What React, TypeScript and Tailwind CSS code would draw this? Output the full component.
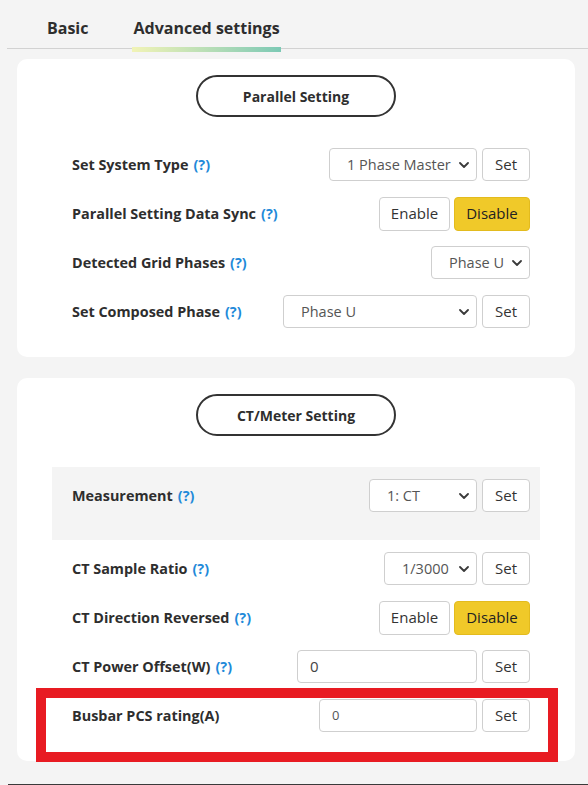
import React from "react";

const Help = () => <span className="ml-[5px] font-bold text-[#1f8ad9]">(?)</span>;

const Label = ({ text, help = true }: { text: string; help?: boolean }) => (
  <div className="text-[14.4px] font-bold leading-5 text-[#2e2e2e]">
    {text}
    {help && <Help />}
  </div>
);

const Chevron = () => (
  <svg width="10" height="6" viewBox="0 0 10 6" className="shrink-0">
    <path d="M1 1 L5 5 L9 1" fill="none" stroke="#3a3a3a" strokeWidth="1.8" strokeLinecap="round" strokeLinejoin="round" />
  </svg>
);

const Select = ({ value, w }: { value: string; w: string }) => (
  <div
    className={`flex h-[33px] ${w} items-center justify-between rounded-[4px] border border-[#cfcfcf] bg-white pl-[17px] pr-[7px] text-[14.5px] text-[#555]`}
  >
    <span>{value}</span>
    <Chevron />
  </div>
);

const SetBtn = () => (
  <div className="flex h-[33px] w-[48px] items-center justify-center rounded-[4px] border border-[#cfcfcf] bg-white text-[15px] text-[#333]">
    Set
  </div>
);

const Toggle = () => (
  <div className="flex gap-[4px]">
    <div className="flex h-[34px] w-[71px] items-center justify-center rounded-[4px] border border-[#cfcfcf] bg-white text-[15px] text-[#333]">
      Enable
    </div>
    <div className="flex h-[34px] w-[76px] items-center justify-center rounded-[4px] border border-[#e3bb1e] bg-[#f0c929] text-[15px] text-[#222]">
      Disable
    </div>
  </div>
);

const Row = ({ children, className = "" }: { children: React.ReactNode; className?: string }) => (
  <div className={`flex h-[49px] items-center justify-between pl-5 pr-[10px] ${className}`}>{children}</div>
);

const Pill = ({ text }: { text: string }) => (
  <div className="mx-auto flex h-[42px] w-[200px] items-center justify-center rounded-full border-2 border-[#333] text-[14px] font-bold text-[#2e2e2e]">
    {text}
  </div>
);

export default function App() {
  return (
    <div className="relative flex h-[785px] w-[588px] flex-col overflow-hidden bg-[#f4f4f4] font-['Open_Sans',sans-serif]">
      {/* Tabs */}
      <div className="ml-[7px] flex h-[49px] border-b border-[#d2d2d2] pl-[40px] text-[16px] font-bold leading-5 text-[#2e2e2e]">
        <div className="pt-[18px]">Basic</div>
        <div className="relative ml-[45px] pt-[18px]">
          Advanced settings
          <div className="absolute left-[-1px] right-[-1px] top-[47px] h-[5px] bg-linear-to-r from-[#f1f3b6] to-[#7cc9b5]" />
        </div>
      </div>

      {/* Card 1 */}
      <div className="ml-[17px] mt-[10px] w-[558px] rounded-[10px] bg-white px-[35px] pb-[21px] pt-4">
        <Pill text="Parallel Setting" />
        <div className="mt-[23px]">
          <Row>
            <Label text="Set System Type" />
            <div className="flex gap-[5px]">
              <Select value="1 Phase Master" w="w-[148px]" />
              <SetBtn />
            </div>
          </Row>
          <Row>
            <Label text="Parallel Setting Data Sync" />
            <Toggle />
          </Row>
          <Row>
            <Label text="Detected Grid Phases" />
            <Select value="Phase U" w="w-[99px]" />
          </Row>
          <Row>
            <Label text="Set Composed Phase" />
            <div className="flex gap-[5px]">
              <Select value="Phase U" w="w-[194px]" />
              <SetBtn />
            </div>
          </Row>
        </div>
      </div>

      {/* Card 2 */}
      <div className="ml-[17px] mt-[21px] w-[558px] rounded-[10px] bg-white px-[35px] pb-[21px] pt-4">
        <Pill text="CT/Meter Setting" />
        <div className="mt-[31px] flex h-[73px] items-start justify-between bg-[#f4f4f4] pl-5 pr-[10px] pt-[12px]">
          <div className="flex h-[33px] items-center">
            <Label text="Measurement" />
          </div>
          <div className="flex gap-[5px]">
            <Select value="1: CT" w="w-[108px]" />
            <SetBtn />
          </div>
        </div>
        <div className="mt-[4px]">
          <Row>
            <Label text="CT Sample Ratio" />
            <div className="flex gap-[5px]">
              <Select value="1/3000" w="w-[93px]" />
              <SetBtn />
            </div>
          </Row>
          <Row>
            <Label text="CT Direction Reversed" />
            <Toggle />
          </Row>
          <Row>
            <Label text="CT Power Offset(W)" />
            <div className="flex gap-[5px]">
              <div className="flex h-[33px] w-[180px] items-center rounded-[4px] border border-[#cfcfcf] bg-white pl-[12px] text-[15px] text-[#444]">
                0
              </div>
              <SetBtn />
            </div>
          </Row>
          <div className="relative">
            <Row>
              <Label text="Busbar PCS rating(A)" help={false} />
              <div className="flex gap-[5px]">
                <div className="flex h-[33px] w-[158px] items-center rounded-[4px] border border-[#cfcfcf] bg-white pl-[12px] text-[13px] text-[#555]">
                  0
                </div>
                <SetBtn />
              </div>
            </Row>
            <div className="pointer-events-none absolute -left-4 -right-[18px] -top-[3px] -bottom-[22px] border-[10px] border-[#e81b22]" />
          </div>
        </div>
      </div>

      <div className="mt-auto ml-[8px] h-px bg-[#3a3a3a]" />
    </div>
  );
}
